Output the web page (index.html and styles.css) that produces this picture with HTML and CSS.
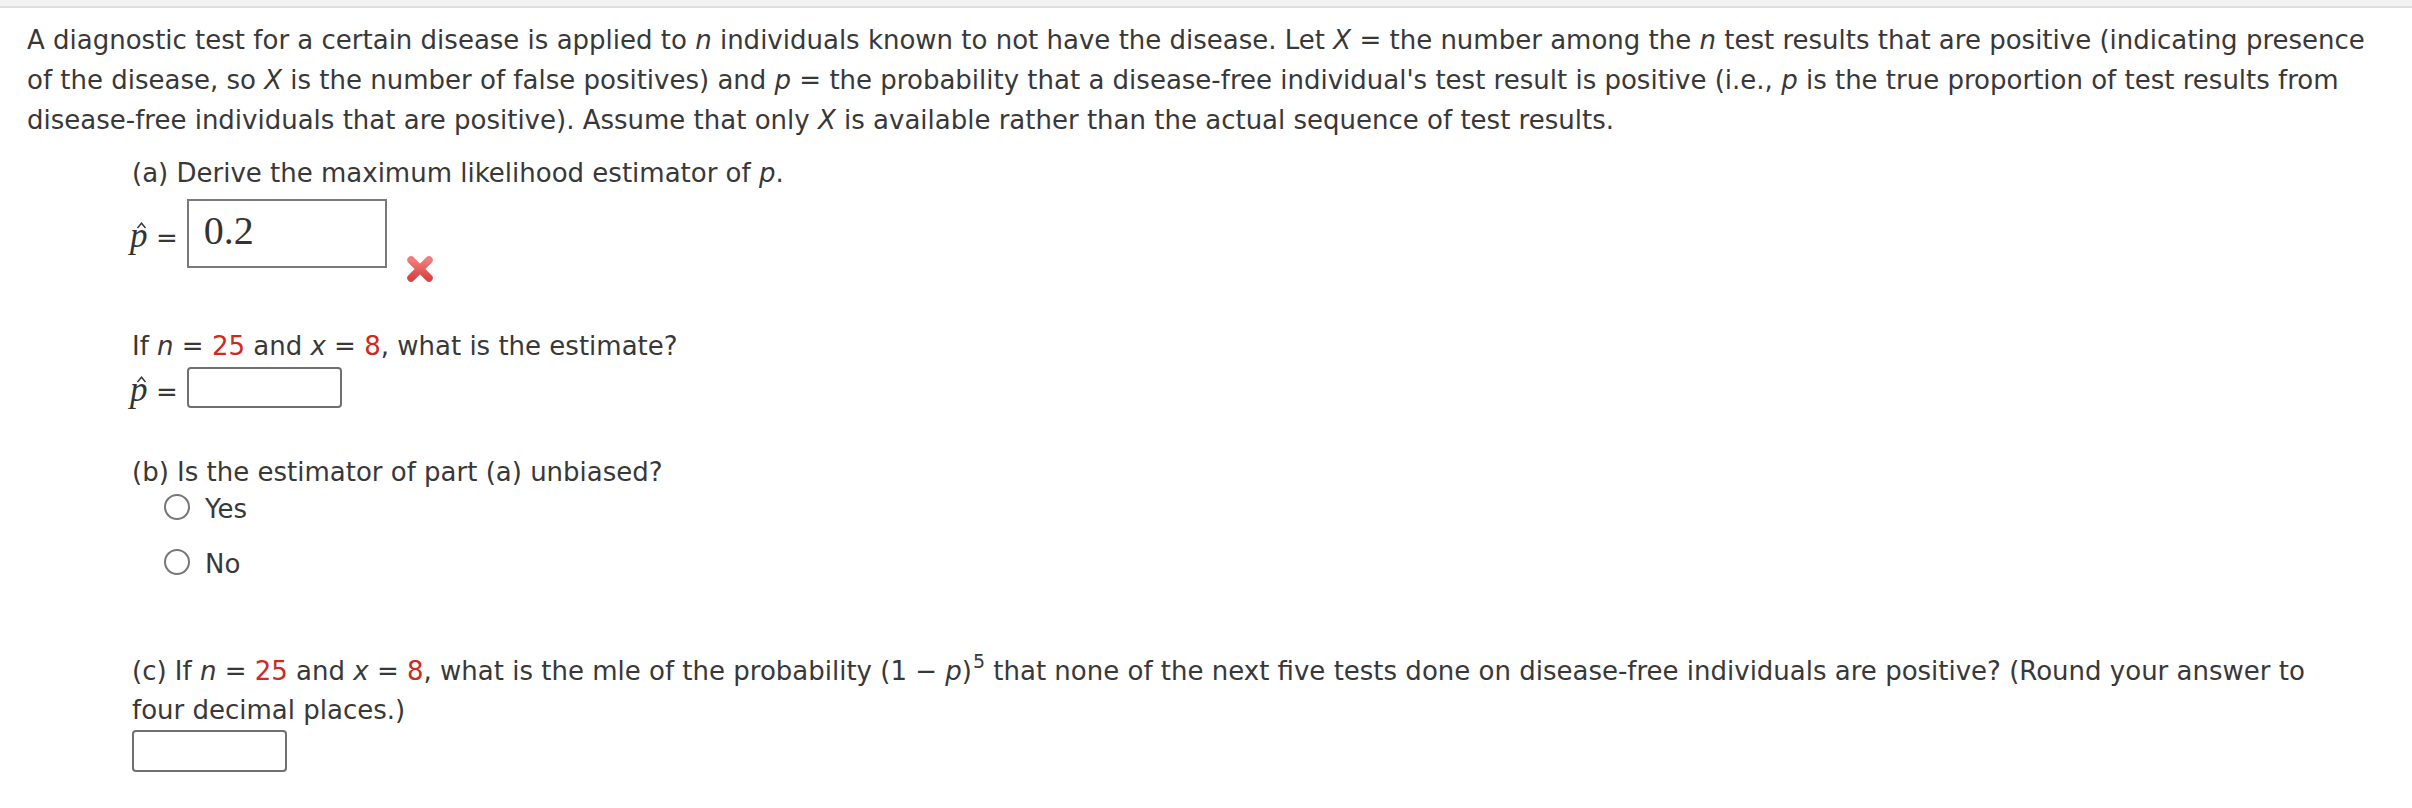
FILE: index.html
```html
<!DOCTYPE html>
<html lang="en">
<head>
<meta charset="utf-8">
<title>Question</title>
<link rel="stylesheet" href="styles.css">
</head>
<body>
<div class="topbar"></div>
<div class="question">
  <p class="intro">A diagnostic test for a certain disease is applied to <i>n</i> individuals known to not have the disease. Let <i>X</i> = the number among the <i>n</i> test results that are positive (indicating presence<br>of the disease, so <i>X</i> is the number of false positives) and <i>p</i> = the probability that a disease-free individual's test result is positive (i.e., <i>p</i> is the true proportion of test results from<br>disease-free individuals that are positive). Assume that only <i>X</i> is available rather than the actual sequence of test results.</p>

  <div class="parts">
    <p class="prompt prompt-a">(a) Derive the maximum likelihood estimator of <i>p</i>.</p>
    <div class="answer-row row-a">
      <span class="phat"><svg class="hat" viewBox="0 0 10 7" aria-hidden="true"><path d="M1 6 L5 1.2 L9 6" fill="none" stroke="#333" stroke-width="1.4"/></svg>p</span>
      <span class="eq">=</span>
      <div class="answer-box filled">0.2</div>
      <svg class="wrong" viewBox="0 0 28 28" aria-label="incorrect">
        <defs>
          <linearGradient id="xg" x1="0" y1="0" x2="0" y2="1">
            <stop offset="0" stop-color="#f27b7b"/>
            <stop offset="1" stop-color="#d94545"/>
          </linearGradient>
        </defs>
        <path d="M5 5 L23 23 M23 5 L5 23" stroke="url(#xg)" stroke-width="7.5" stroke-linecap="round" fill="none"/>
      </svg>
    </div>

    <p class="prompt prompt-est">If <i>n</i> = <span class="red">25</span> and <i>x</i> = <span class="red">8</span>, what is the estimate?</p>
    <div class="answer-row row-b">
      <span class="phat"><svg class="hat" viewBox="0 0 10 7" aria-hidden="true"><path d="M1 6 L5 1.2 L9 6" fill="none" stroke="#333" stroke-width="1.4"/></svg>p</span>
      <span class="eq">=</span>
      <div class="answer-box blank"></div>
    </div>

    <p class="prompt prompt-b">(b) Is the estimator of part (a) unbiased?</p>
    <div class="choices">
      <div class="choice"><span class="radio"></span><span class="choice-label">Yes</span></div>
      <div class="choice"><span class="radio"></span><span class="choice-label">No</span></div>
    </div>

    <p class="prompt prompt-c">(c) If <i>n</i> = <span class="red">25</span> and <i>x</i> = <span class="red">8</span>, what is the mle of the probability (1 &minus; <i>p</i>)<sup>5</sup> that none of the next five tests done on disease-free individuals are positive? (Round your answer to<br>four decimal places.)</p>
    <div class="answer-box blank blank-c"></div>
  </div>
</div>
</body>
</html>
```

FILE: styles.css
```css
html, body {
  margin: 0;
  padding: 0;
  background: #ffffff;
}

body {
  font-family: "DejaVu Sans", Verdana, sans-serif;
  font-size: 26px;
  line-height: 40px;
  color: #383838;
}

.topbar {
  height: 6px;
  background: #f3f3f3;
  border-bottom: 2px solid #dedede;
}

.question {
  padding: 12px 0 0 27px;
}

.intro {
  margin: 0;
  white-space: nowrap;
}

i {
  font-style: italic;
}

.red {
  color: #cf2a1e;
}

.parts {
  margin-left: 105px;
}

.prompt {
  margin: 0;
  white-space: nowrap;
}

.prompt-a {
  margin-top: 13px;
}

.answer-row {
  display: flex;
  align-items: center;
}

.row-a {
  margin-top: 6px;
}

.phat {
  position: relative;
  display: inline-block;
  width: 28px;
  margin-left: -4px;
  padding-left: 2px;
  box-sizing: border-box;
  font-family: "Liberation Serif", "Times New Roman", serif;
  font-style: italic;
  font-size: 35px;
  line-height: 30px;
  margin-top: 4px;
  color: #333;
}

.hat {
  position: absolute;
  left: 8px;
  top: 1px;
  width: 11px;
  height: 7px;
}

.eq {
  display: inline-block;
  line-height: 26px;
  margin-top: 8px;
}

.answer-box {
  box-sizing: border-box;
  background: #fff;
}

.filled {
  width: 200px;
  height: 69px;
  margin-left: 9px;
  border: 2px solid #7a7a7a;
  padding: 8px 0 0 15px;
  font-family: "Liberation Serif", "Times New Roman", serif;
  font-size: 40px;
  line-height: 44px;
  color: #333;
}

.wrong {
  width: 28px;
  height: 28px;
  margin-left: 19px;
  align-self: flex-end;
  margin-bottom: -15px;
}

.prompt-est {
  margin-top: 58px;
}

.row-b {
  margin-top: 1px;
}

.blank {
  width: 155px;
  height: 41px;
  border: 2px solid #707070;
  border-radius: 4px;
}

.row-b .blank {
  margin-left: 9px;
}

.prompt-b {
  margin-top: 44px;
}

.choices {
  display: flex;
  flex-direction: column;
  gap: 19px;
  margin-top: -1px;
  padding-left: 32px;
}

.choice {
  display: flex;
  align-items: center;
  height: 36px;
  line-height: 36px;
}

.radio {
  box-sizing: border-box;
  width: 26px;
  height: 26px;
  border: 2px solid #777;
  border-radius: 50%;
  margin-right: 15px;
  margin-bottom: 4px;
}

.prompt-c {
  margin-top: 70px;
  line-height: 39px;
}

.prompt-c sup {
  font-size: 19px;
  line-height: 0;
  vertical-align: 12px;
  margin-left: 1px;
}

.blank-c {
  height: 42px;
  margin-top: 0;
}
```
